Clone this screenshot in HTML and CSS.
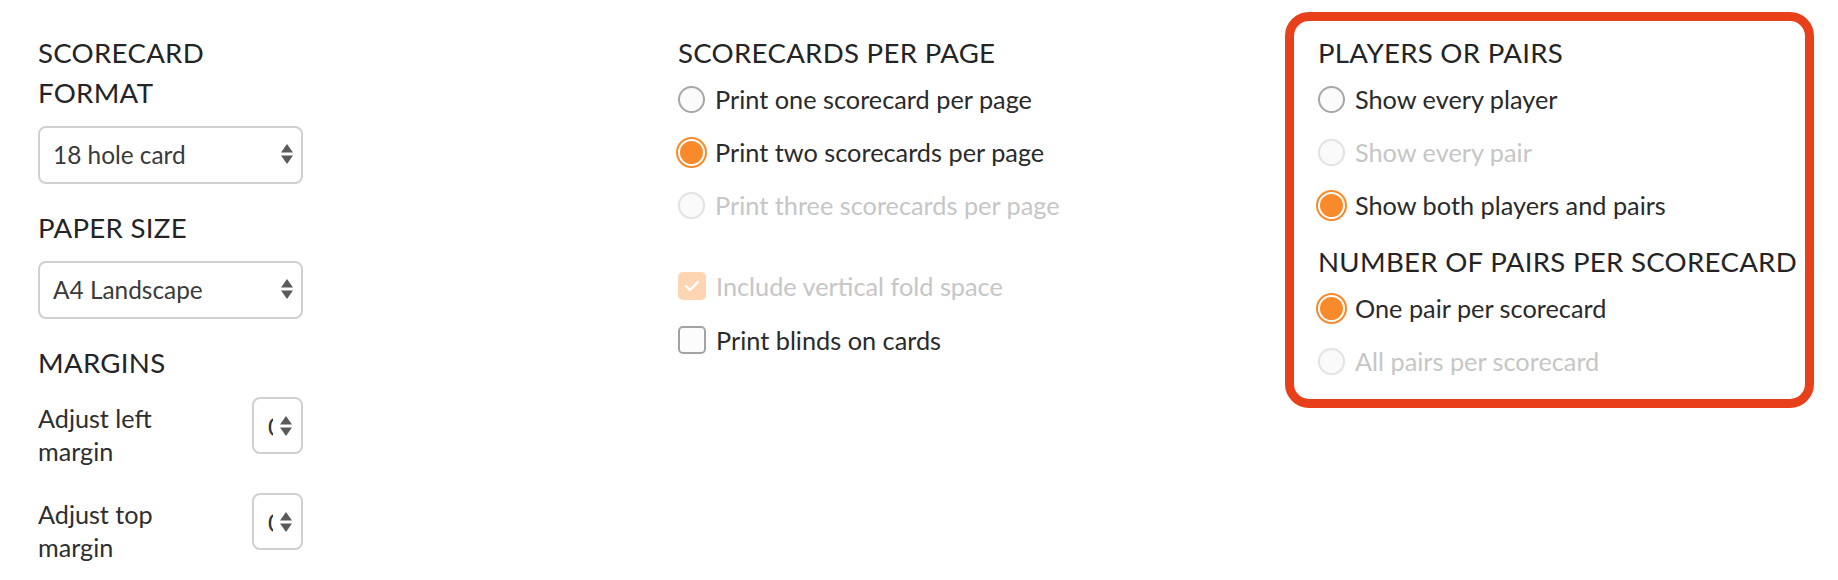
FILE: index.html
```html
<!DOCTYPE html>
<html lang="en">
<head>
<meta charset="utf-8">
<title>Scorecard print settings</title>
<link rel="stylesheet" href="styles.css">
</head>
<body>
<div class="page">
  <section class="col col-format">
    <h2 class="heading">SCORECARD FORMAT</h2>
    <div class="select">
      <span class="select-value">18 hole card</span>
      <svg class="arrows" width="12" height="20" viewBox="0 0 12 20"><polygon points="6,0 12,8.5 0,8.5"/><polygon points="0,11.5 12,11.5 6,20"/></svg>
    </div>
    <h2 class="heading heading-gap">PAPER SIZE</h2>
    <div class="select">
      <span class="select-value">A4 Landscape</span>
      <svg class="arrows" width="12" height="20" viewBox="0 0 12 20"><polygon points="6,0 12,8.5 0,8.5"/><polygon points="0,11.5 12,11.5 6,20"/></svg>
    </div>
    <h2 class="heading heading-gap">MARGINS</h2>
    <div class="margin-row">
      <span class="margin-label">Adjust left margin</span>
      <div class="num">
        <span class="num-value">0</span>
        <svg class="arrows" width="12" height="20" viewBox="0 0 12 20"><polygon points="6,0 12,8.5 0,8.5"/><polygon points="0,11.5 12,11.5 6,20"/></svg>
      </div>
    </div>
    <div class="margin-row margin-row-2">
      <span class="margin-label">Adjust top margin</span>
      <div class="num">
        <span class="num-value">0</span>
        <svg class="arrows" width="12" height="20" viewBox="0 0 12 20"><polygon points="6,0 12,8.5 0,8.5"/><polygon points="0,11.5 12,11.5 6,20"/></svg>
      </div>
    </div>
  </section>

  <section class="col col-cards">
    <h2 class="heading">SCORECARDS PER PAGE</h2>
    <div class="option"><span class="radio"></span><span>Print one scorecard per page</span></div>
    <div class="option"><span class="radio radio-on"></span><span>Print two scorecards per page</span></div>
    <div class="option option-disabled"><span class="radio radio-off"></span><span>Print three scorecards per page</span></div>
    <div class="checks">
      <div class="option option-check option-disabled">
        <span class="checkbox checkbox-on-disabled"><svg width="16" height="12" viewBox="0 0 16 12"><polyline points="2,6 6,10 14,2" fill="none" stroke="#fff" stroke-width="2.4" stroke-linecap="round" stroke-linejoin="round"/></svg></span>
        <span>Include vertical fold space</span>
      </div>
      <div class="option option-check"><span class="checkbox"></span><span>Print blinds on cards</span></div>
    </div>
  </section>

  <section class="col col-players">
    <h2 class="heading">PLAYERS OR PAIRS</h2>
    <div class="option"><span class="radio"></span><span>Show every player</span></div>
    <div class="option option-disabled"><span class="radio radio-off"></span><span>Show every pair</span></div>
    <div class="option"><span class="radio radio-on"></span><span>Show both players and pairs</span></div>
    <h2 class="heading heading-pairs">NUMBER OF PAIRS PER SCORECARD</h2>
    <div class="option"><span class="radio radio-on"></span><span>One pair per scorecard</span></div>
    <div class="option option-disabled"><span class="radio radio-off"></span><span>All pairs per scorecard</span></div>
  </section>
</div>
</body>
</html>
```

FILE: styles.css
```css
* { box-sizing: border-box; }
html, body { margin: 0; padding: 0; background: #fff; }
body {
  font-family: Lato, "Open Sans", sans-serif;
  color: #2e2e2e;
  width: 1838px;
  height: 580px;
  overflow: hidden;
}
.page {
  display: flex;
  align-items: flex-start;
  padding-left: 38px;
}
.col-format { width: 265px; padding-top: 33px; }
.col-cards { width: 607px; margin-left: 375px; padding-top: 33px; }
.col-players {
  width: 529px;
  margin-top: 12px;
  border: 9px solid #e8401b;
  border-radius: 24px;
  padding: 12px 8px 11px 24px;
  white-space: nowrap;
}
.heading {
  margin: 0;
  font-size: 27.6px;
  line-height: 40px;
  font-weight: 400;
  letter-spacing: 0.3px;
  color: #242424;
}
.heading-gap { margin-top: 24px; }
.heading-pairs { margin-top: 10px; }

.select {
  margin-top: 13px;
  height: 58px;
  border: 2px solid #d0d0d0;
  border-radius: 8px;
  display: flex;
  align-items: center;
  justify-content: space-between;
  padding: 0 8px 2px 13px;
  font-size: 24.4px;
  color: #3a3a3a;
}
.arrows { fill: #5a5a5a; display: block; }

.margin-row {
  margin-top: 14px;
  display: flex;
  justify-content: space-between;
  align-items: flex-start;
}
.margin-row-2 { margin-top: 25px; }
.margin-label {
  width: 150px;
  margin-top: 5px;
  font-size: 25.2px;
  line-height: 33px;
  color: #2e2e2e;
}
.num {
  width: 51px;
  height: 57px;
  border: 2px solid #d0d0d0;
  border-radius: 8px;
  display: flex;
  align-items: center;
  padding: 0 8px 0 14px;
  gap: 7px;
}
.num-value {
  width: 5px;
  overflow: hidden;
  font-size: 25px;
  color: #333;
}

.option {
  display: flex;
  align-items: center;
  gap: 10px;
  height: 53px;
  font-size: 25.3px;
  line-height: 33px;
  color: #2a2a2a;
}
.option-disabled { color: #c6c6c6; }
.radio {
  width: 27px;
  height: 27px;
  flex: none;
  border-radius: 50%;
  border: 2px solid #a6a6a6;
  background: #fbfbfb;
}
.radio-on {
  border: 2px solid #fff;
  background: #f98a2b;
  box-shadow: 0 0 0 2px #f98a2b;
}
.radio-off {
  border-color: #e3e3e3;
  background: #fafafa;
  box-shadow: 0 0 2px rgba(0, 0, 0, 0.06);
}
.checks { margin-top: 27px; }
.option-check { height: 54px; }
.checkbox {
  width: 28px;
  height: 28px;
  flex: none;
  border-radius: 5px;
  border: 2px solid #a3a3a3;
  background: #fcfcfc;
  display: flex;
  align-items: center;
  justify-content: center;
}
.checkbox-on-disabled {
  border: none;
  background: #fdd5b2;
}
```
